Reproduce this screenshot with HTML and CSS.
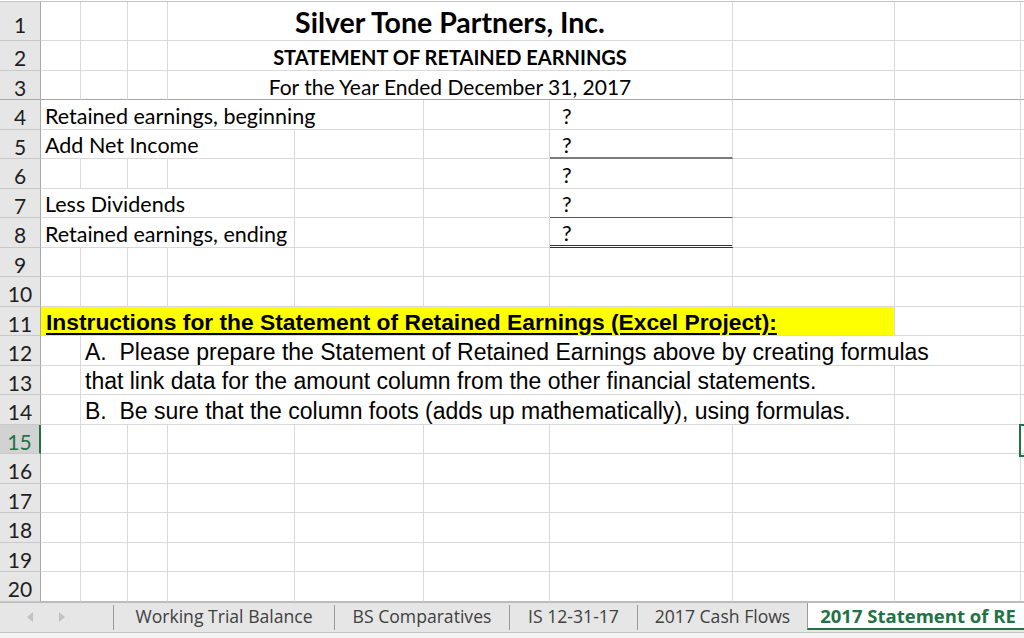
FILE: index.html
```html
<!DOCTYPE html>
<html>
<head>
<meta charset="utf-8">
<link rel="stylesheet" href="styles.css">
</head>
<body>
<div class="sheet">
  <div class="r r1"><div class="h">1</div><div></div><div></div><div></div><div class="title s4">Silver Tone Partners, Inc.</div><div></div><div></div><div></div></div>
  <div class="r"><div class="h">2</div><div></div><div></div><div></div><div class="sub s4">STATEMENT OF RETAINED EARNINGS</div><div></div><div></div><div></div></div>
  <div class="r frz"><div class="h">3</div><div></div><div></div><div></div><div class="date s4">For the Year Ended December 31, 2017</div><div></div><div></div><div></div></div>
  <div class="r"><div class="h">4</div><div class="s5">Retained earnings, beginning</div><div></div><div class="q">?</div><div></div><div></div><div></div></div>
  <div class="r"><div class="h">5</div><div class="s4">Add Net Income</div><div></div><div></div><div class="q line">?</div><div></div><div></div><div></div></div>
  <div class="r"><div class="h">6</div><div></div><div></div><div></div><div></div><div></div><div></div><div class="q">?</div><div></div><div></div><div></div></div>
  <div class="r"><div class="h">7</div><div class="s4">Less Dividends</div><div></div><div></div><div class="q line1">?</div><div></div><div></div><div></div></div>
  <div class="r"><div class="h">8</div><div class="s4">Retained earnings, ending</div><div></div><div></div><div class="q dbl">?</div><div></div><div></div><div></div></div>
  <div class="r"><div class="h">9</div><div></div><div></div><div></div><div></div><div></div><div></div><div></div><div></div><div></div><div></div></div>
  <div class="r"><div class="h">10</div><div></div><div></div><div></div><div></div><div></div><div></div><div></div><div></div><div></div><div></div></div>
  <div class="r"><div class="h">11</div><div class="instr s8"><span class="u">Instructions for the Statement of Retained Earnings (Excel Project):</span></div><div></div><div></div></div>
  <div class="r"><div class="h">12</div><div></div><div class="txt s8">A.  Please prepare the Statement of Retained Earnings above by creating formulas</div><div></div></div>
  <div class="r"><div class="h">13</div><div></div><div class="txt s7">that link data for the amount column from the other financial statements.</div><div></div><div></div></div>
  <div class="r"><div class="h">14</div><div></div><div class="txt s7">B.  Be sure that the column foots (adds up mathematically), using formulas.</div><div></div><div></div></div>
  <div class="r"><div class="h sel">15</div><div></div><div></div><div></div><div></div><div></div><div></div><div></div><div></div><div></div><div></div></div>
  <div class="r"><div class="h">16</div><div></div><div></div><div></div><div></div><div></div><div></div><div></div><div></div><div></div><div></div></div>
  <div class="r"><div class="h">17</div><div></div><div></div><div></div><div></div><div></div><div></div><div></div><div></div><div></div><div></div></div>
  <div class="r"><div class="h">18</div><div></div><div></div><div></div><div></div><div></div><div></div><div></div><div></div><div></div><div></div></div>
  <div class="r"><div class="h">19</div><div></div><div></div><div></div><div></div><div></div><div></div><div></div><div></div><div></div><div></div></div>
  <div class="r last"><div class="h">20</div><div></div><div></div><div></div><div></div><div></div><div></div><div></div><div></div><div></div><div></div></div>
  <div class="cursor"></div>
</div>
<div class="tabbar">
  <div class="nav">
    <svg class="arrow" width="6" height="10" viewBox="0 0 6 10"><path d="M6 0 L0 5 L6 10 Z"/></svg>
    <svg class="arrow" width="6" height="10" viewBox="0 0 6 10"><path d="M0 0 L6 5 L0 10 Z"/></svg>
  </div>
  <span class="sep"></span>
  <div class="tab t1">Working Trial Balance</div>
  <span class="sep"></span>
  <div class="tab t2">BS Comparatives</div>
  <span class="sep"></span>
  <div class="tab t3">IS 12-31-17</div>
  <span class="sep"></span>
  <div class="tab t4">2017 Cash Flows</div>
  <div class="tab active">2017 Statement of RE</div>
</div>
<div class="status"></div>
</body>
</html>
```
FILE: styles.css
```css
html, body {
  margin: 0;
  padding: 0;
}
body {
  width: 1024px;
  height: 638px;
  overflow: hidden;
  background: #ffffff;
  font-family: Lato, "Liberation Sans", sans-serif;
  color: #000;
}
.sheet {
  position: relative;
  margin-top: 1px;
  border-top: 1px solid #c4c4c4;
}
.r {
  display: grid;
  grid-template-columns: 41px 40px 47px 40px 127px 129px 126px 183px 162px 126px 1fr;
  height: 29.5px;
}
.r1 {
  height: 39px;
}
.r > div {
  box-sizing: border-box;
  border-right: 1px solid #d9d9d9;
  border-bottom: 1px solid #d9d9d9;
  display: flex;
  align-items: flex-end;
  white-space: pre;
  font-size: 21.5px;
  line-height: 1;
  padding: 0 0 1.5px 4px;
  min-width: 0;
}
.r > .h {
  background: #e6e6e6;
  border-right-color: #a9a9a9;
  border-bottom-color: #c9c9c9;
  justify-content: center;
  font-size: 21px;
  padding: 0 0 1.5px 0;
  color: #1e1e1e;
}
.r1 > .h {
  padding-bottom: 5px;
}
.r > .sel {
  background: #d2d2d2;
  color: #217346;
  border-right: 2px solid #217346;
}
.frz > div {
  border-bottom-color: #a8a8a8;
}
.r.frz > .h {
  border-bottom-color: #a8a8a8;
}
.last > div {
  border-bottom-color: #bcbcbc;
}
.s4 { grid-column: span 4; }
.s5 { grid-column: span 5; }
.s7 { grid-column: span 7; }
.s8 { grid-column: span 8; }

.r > .title {
  justify-content: center;
  font-weight: 700;
  font-size: 28.5px;
  padding: 0 0 4px 0;
}
.r > .sub {
  justify-content: center;
  font-weight: 700;
  font-size: 20px;
  padding: 0 0 3px 0;
}
.r > .date {
  justify-content: center;
  font-size: 21px;
  padding: 0 0 2px 0;
}
.r > .q {
  padding-left: 12px;
}
.r > .line {
  border-bottom: 2px solid #7a7a7a;
  padding-bottom: 0.5px;
}
.r > .line1 {
  border-bottom: 1px solid #555555;
}
.r > .dbl {
  border-bottom: 3px double #333333;
  padding-bottom: 0;
}
.r > .instr {
  background: #ffff00;
  font-family: "Liberation Sans", Arial, sans-serif;
  font-weight: 700;
  font-size: 22.8px;
  padding: 0 0 1.5px 5px;
}
.u {
  text-decoration: underline;
  text-decoration-thickness: 2px;
  text-underline-offset: 3px;
}
.r > .txt {
  font-family: "Liberation Sans", Arial, sans-serif;
  font-size: 23px;
  padding: 0 0 1px 4px;
}
.cursor {
  position: absolute;
  left: 1019px;
  top: 422px;
  width: 20px;
  height: 33px;
  box-sizing: border-box;
  border: 2px solid #217346;
}

.tabbar {
  display: flex;
  align-items: stretch;
  height: 31px;
  box-sizing: border-box;
  background: #e6e6e6;
  border-top: 1px solid #bcbcbc;
  border-bottom: 1px solid #c6c6c6;
  font-family: "Open Sans", "Noto Sans", sans-serif;
  font-size: 17.6px;
  color: #404040;
  overflow: hidden;
}
.nav {
  width: 113px;
  flex-shrink: 0;
  display: flex;
  align-items: center;
  padding-left: 27px;
  box-sizing: border-box;
  gap: 26px;
}
.arrow {
  fill: #c2c2c2;
}
.sep {
  width: 1px;
  flex-shrink: 0;
  align-self: center;
  height: 25px;
  background: #9a9a9a;
}
.tab {
  flex-shrink: 0;
  display: flex;
  align-items: center;
  justify-content: center;
  white-space: nowrap;
  padding-bottom: 2px;
}
.t1 { width: 220px; }
.t2 { width: 174px; }
.t3 { width: 127px; }
.t4 { width: 169px; }
.active {
  width: 221px;
  background: #ffffff;
  color: #217346;
  font-weight: 700;
  font-size: 18.5px;
  border-left: 1px solid #9a9a9a;
  border-bottom: 2px solid #217346;
  margin-bottom: 2px;
  box-sizing: border-box;
  padding-bottom: 0;
}
.status {
  height: 6px;
  background: #f3f3f3;
}
```
